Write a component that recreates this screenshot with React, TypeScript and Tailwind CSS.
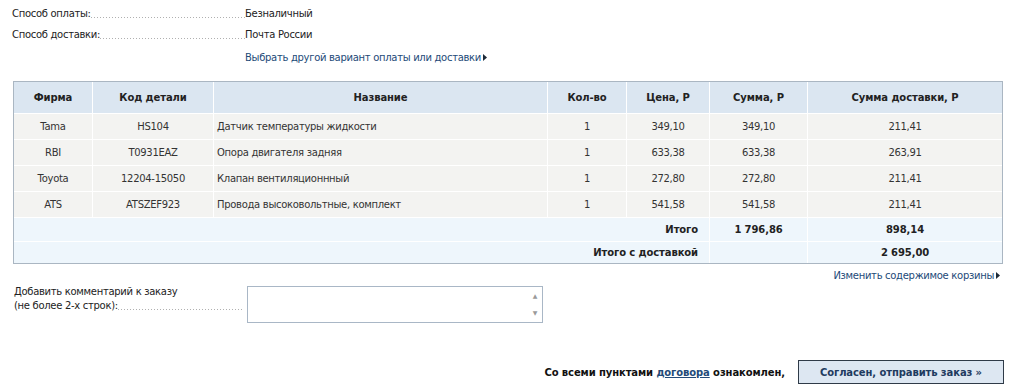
const FONT = "font-['DejaVu_Sans',Tahoma,sans-serif]"

interface Item {
  firm: string
  code: string
  name: string
  qty: number
  price: string
  sum: string
  delivery: string
}

const ITEMS: Item[] = [
  { firm: 'Tama', code: 'HS104', name: 'Датчик температуры жидкости', qty: 1, price: '349,10', sum: '349,10', delivery: '211,41' },
  { firm: 'RBI', code: 'T0931EAZ', name: 'Опора двигателя задняя', qty: 1, price: '633,38', sum: '633,38', delivery: '263,91' },
  { firm: 'Toyota', code: '12204-15050', name: 'Клапан вентиляционнный', qty: 1, price: '272,80', sum: '272,80', delivery: '211,41' },
  { firm: 'ATS', code: 'ATSZEF923', name: 'Провода высоковольтные, комплект', qty: 1, price: '541,58', sum: '541,58', delivery: '211,41' },
]

function Arrow() {
  return (
    <svg width="4" height="7" viewBox="0 0 4 7" className="ml-[2px] inline-block">
      <path d="M0 0 L4 3.5 L0 7 Z" fill="#1d2a38" />
    </svg>
  )
}

function Dots({ className = '' }: { className?: string }) {
  return (
    <span
      className={`h-px flex-1 bg-[linear-gradient(to_right,#b0b0b0_1px,transparent_1px)] bg-[length:3px_1px] bg-repeat-x ${className}`}
    />
  )
}

function InfoRow({ label, value }: { label: string; value: string }) {
  return (
    <div className="flex h-[21px] items-center">
      <div className="flex w-[233px] items-center">
        <span>{label}</span>
        <Dots className="mt-[7px]" />
      </div>
      <span>{value}</span>
    </div>
  )
}

export default function App() {
  const th = 'h-[31px] bg-[#dbe6f1] text-center font-bold tracking-[-0.1px] text-[#222]'
  const td = 'h-[26px] border-t border-white bg-[#f3f3f1] text-[#333]'
  const tot = 'border-t border-white bg-[#eef6fc]'

  return (
    <div className={`${FONT} h-[390px] w-[1024px] bg-white text-[10px] tracking-[-0.3px] text-[#222]`}>
      {/* payment / delivery */}
      <div className="pl-[12px] pt-[3px]">
        <InfoRow label="Способ оплаты:" value="Безналичный" />
        <InfoRow label="Способ доставки:" value="Почта России" />
        <div className="mt-[2px] flex h-[21px] items-center pl-[233px]">
          <a className="text-[#234a78]">Выбрать другой вариант оплаты или доставки</a>
          <Arrow />
        </div>
      </div>

      {/* order table */}
      <div className="ml-[13px] mt-[13px] w-[990px] border border-[#aab6c2]">
        <table className="w-[988px] table-fixed border-separate border-spacing-0">
          <colgroup>
            <col className="w-[78px]" />
            <col className="w-[121px]" />
            <col className="w-[334px]" />
            <col className="w-[79px]" />
            <col className="w-[83px]" />
            <col className="w-[98px]" />
            <col className="w-[195px]" />
          </colgroup>
          <thead>
            <tr>
              <th className={th}>Фирма</th>
              <th className={`${th} border-l border-white`}>Код детали</th>
              <th className={`${th} border-l border-white`}>Название</th>
              <th className={`${th} border-l border-white`}>Кол-во</th>
              <th className={`${th} border-l border-white`}>Цена, Р</th>
              <th className={`${th} border-l border-white`}>Сумма, Р</th>
              <th className={`${th} border-l border-white`}>Сумма доставки, Р</th>
            </tr>
          </thead>
          <tbody>
            {ITEMS.map((it) => (
              <tr key={it.code}>
                <td className={`${td} text-center`}>{it.firm}</td>
                <td className={`${td} border-l text-center`}>{it.code}</td>
                <td className={`${td} border-l pl-[3px] text-left`}>{it.name}</td>
                <td className={`${td} border-l text-center`}>{it.qty}</td>
                <td className={`${td} border-l text-center`}>{it.price}</td>
                <td className={`${td} border-l text-center`}>{it.sum}</td>
                <td className={`${td} border-l text-center`}>{it.delivery}</td>
              </tr>
            ))}
            <tr>
              <td colSpan={5} className={`${tot} h-[24px] pr-[11px] text-right font-bold tracking-[-0.1px]`}>
                Итого
              </td>
              <td className={`${tot} h-[24px] border-l text-center font-bold tracking-[-0.1px]`}>1 796,86</td>
              <td className={`${tot} h-[24px] border-l text-center font-bold tracking-[-0.1px]`}>898,14</td>
            </tr>
            <tr>
              <td colSpan={5} className={`${tot} h-[22px] pr-[11px] text-right font-bold tracking-[-0.1px]`}>
                Итого с доставкой
              </td>
              <td className={`${tot} h-[22px] border-l`} />
              <td className={`${tot} h-[22px] border-l text-center font-bold tracking-[-0.1px]`}>2 695,00</td>
            </tr>
          </tbody>
        </table>
      </div>

      <div className="mt-[4px] flex h-[15px] items-center justify-end pr-[24px]">
        <a className="text-[#234a78]">Изменить содержимое корзины</a>
        <Arrow />
      </div>

      {/* comment */}
      <div className="mt-[3px] flex pl-[14px]">
        <div className="-mt-[1px] flex w-[229px] flex-col leading-[14px]">
          <span>Добавить комментарий к заказу</span>
          <div className="flex items-center">
            <span>(не более 2-х строк):</span>
            <Dots className="mt-[7px]" />
          </div>
        </div>
        <div className="ml-[4px] flex h-[37px] w-[296px] justify-end border border-[#a9b7c6] bg-white">
          <div className="flex w-[14px] flex-col items-center justify-between py-[6px] text-[6px] leading-none text-[#9a9a9a]">
            <span>▲</span>
            <span>▼</span>
          </div>
        </div>
      </div>

      {/* submit */}
      <div className="mt-[37px] flex items-center justify-end pr-[20px]">
        <span className="font-bold tracking-[-0.1px] text-[#111]">
          Со всеми пунктами{' '}
          <a className="text-[#234a78] underline">договора</a> ознакомлен,
        </span>
        <button className="ml-[13px] h-[24px] w-[206px] border border-[#2f3b48] bg-[#dde7f2] text-[10px] font-bold tracking-[-0.1px] text-[#1f3b60]">
          Согласен, отправить заказ »
        </button>
      </div>
    </div>
  )
}
